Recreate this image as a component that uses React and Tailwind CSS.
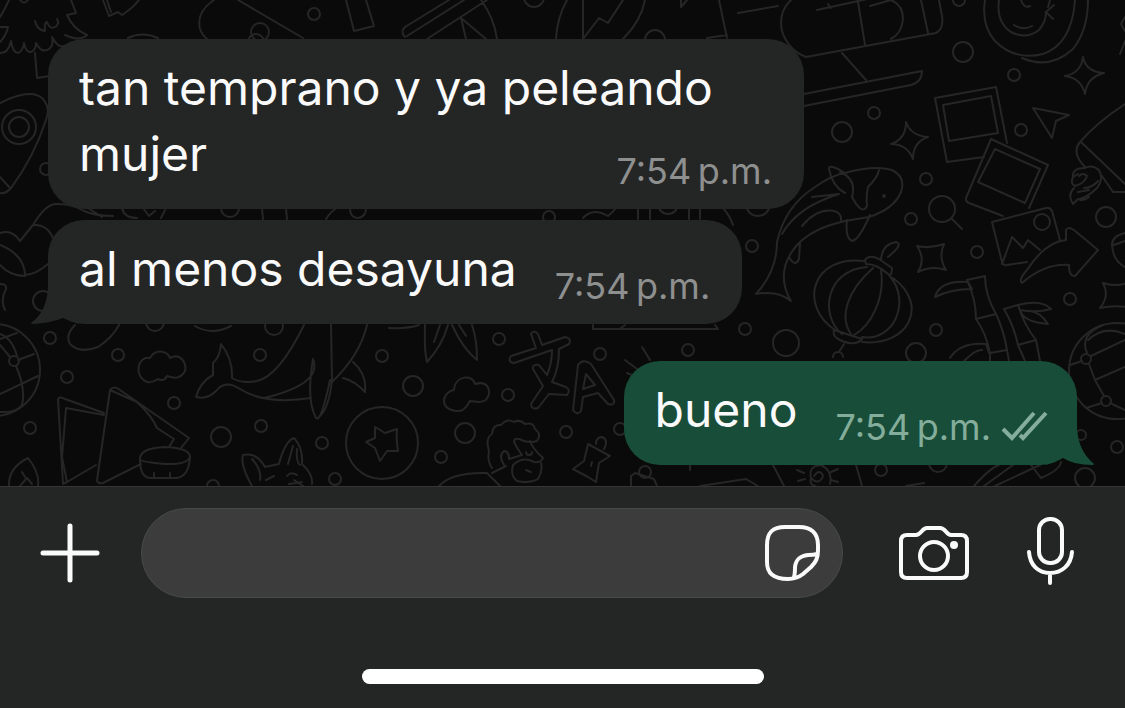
import { useState } from 'react'
import clsx from 'clsx'

const MESSAGES = [
  { id: 1, text: 'tan temprano y ya peleando mujer', time: '7:54\u2009p.m.', mine: false, tail: false },
  { id: 2, text: 'al menos desayuna', time: '7:54\u2009p.m.', mine: false, tail: true },
  { id: 3, text: 'bueno', time: '7:54\u2009p.m.', mine: true, tail: true },
]

// small bubbles scattered between the doodles: [cx, cy, r]
const DOTS = [
  [314, 14, 6], [534, -3, 10], [655, 40, 10], [46, 169, 6], [260, 32, 9], [256, 42, 8],
  [963, 52, 10], [1014, 75, 6], [874, 113, 6], [842, 132, 10], [1021, 130, 6], [926, 179, 6],
  [911, 219, 6], [977, 252, 6], [1106, 217, 10], [1070, 299, 6], [936, 330, 6], [786, 343, 13],
  [916, 353, 10], [745, 329, 6], [752, 246, 6], [758, 204, 12], [688, 350, 6], [959, 0, 6],
  [50, 338, 6], [118, 355, 6], [67, 377, 6], [174, 403, 6], [30, 428, 6], [221, 437, 10],
  [261, 426, 6], [322, 443, 6], [260, 355, 6], [274, 326, 9], [155, 322, 9], [43, 301, 10],
  [382, 356, 6], [413, 386, 10], [465, 433, 10], [441, 457, 6], [335, 479, 6], [508, 395, 6],
  [499, 339, 6], [600, 354, 6], [566, 432, 6], [620, 429, 6], [213, 486, 6], [1117, 447, 6],
  [1085, 478, 10], [881, 470, 6], [938, 463, 9], [1081, 435, 5], [645, 472, 6], [230, 208, 9],
  [549, 217, 6], [668, 204, 10],
]

const DOODLES = [
  // tree
  'M9 0Q5 9 0 17M0 27L8 27Q6 36 0 42M71 0L76 13L67 15Q73 29 87 35Q80 42 65 35M0 53Q8 54 11 41Q13 53 18 53Q23 51 24 43Q26 53 31 52Q36 50 36 43Q42 54 49 49Q54 45 52 37Q58 48 63 46M35 21Q37 30 45 31Q44 23 47 22Q50 30 55 27Q60 24 57 19M35 53L37 78L49 76M20 0Q24 5 28 0',
  // ribbon, rocket and pencil along the top
  'M103 0L109 16L118 12L122 15Q133 8 139 0M107 0L111 12M128 38Q142 31 158 38M214 0Q196 12 200 29Q202 35 207 39M238 0L303 38M346 0L354 31L374 26L366 0',
  'M449 0L405 27Q400 32 405 37M464 0L407 36M487 0L430 37L420 44M461 18L466 39M461 18L486 39M481 0Q494 18 497 39M567 0Q557 18 556 39M583 0V39L599 18L608 23L623 0M645 0Q641 21 623 39M681 0V7L687 0M719 0L727 38M707 38L727 35',
  // eye shaped leaf
  'M0 103Q30 88 42 98Q51 107 46 120Q34 157 11 188Q6 194 0 193M0 177L9 187',
  // telescope and stand
  'M738 13L778 6M791 0Q778 12 782 31Q788 50 806 57L936 33Q944 29 942 16L939 0M817 10L872 -2M828 4L831 8M858 2L865 45M870 6L891 0Q903 5 903 19Q902 33 891 39M921 0L928 33M842 53L866 80M804 94L922 71Q922 82 911 85L804 106',
  // globe face
  'M985 0Q981 25 995 41Q1015 61 1043 54Q1072 44 1075 0M1022 58Q1050 70 1073 49Q1088 30 1088 0M999 0Q996 22 1011 32Q1026 40 1039 30Q1046 22 1046 12L1054 5M1046 12L1053 19M1048 7L1050 0M1014 25Q1023 31 1032 26M1021 0Q1024 9 1030 6',
  // sparkles
  'M1083 57Q1086 72 1104 73Q1087 77 1085 94Q1081 78 1065 76Q1081 73 1083 57ZM906 122Q911 136 928 137Q913 142 913 159Q907 144 891 144Q906 139 906 122Z',
  'M917 246Q930 249 944 244Q938 257 946 270Q932 265 918 272Q926 259 917 246ZM1103 283Q1114 287 1128 283M1103 283Q1110 296 1100 308Q1113 305 1128 307M0 284Q7 284 6 289Q0 300 5 310',
  // photos
  'M935 98L996 87L1007 143M935 98L947 162L984 157M943 105L991 96L998 133L949 141ZM991 139L1048 165L1029 208M991 139L966 198Q965 201 969 203L1003 216M995 149L1040 169L1025 203L978 182Z',
  'M992 222L1046 208Q1050 207 1052 211L1060 240M992 222L1002 262Q1003 266 1007 265L1027 262M1002 264L1012 237L1023 248L1028 240L1040 250M1022 283Q1018 280 1027 270Q1045 242 1066 240L1066 230Q1068 226 1074 230L1098 250L1075 276Q1069 277 1069 265Q1045 263 1022 283Z',
  'M1033 108L1069 115L1056 121L1052 138ZM1125 104Q1096 123 1080 142Q1071 153 1085 167M1081 142L1125 184M1102 176L1113 192L1125 192',
  // clump of leaves
  'M1085 168Q1072 168 1073 177L1078 174M1073 177Q1070 184 1075 186Q1084 184 1087 176Q1083 172 1079 176M1085 168Q1092 164 1099 170Q1104 179 1097 188Q1089 196 1080 199M1074 188Q1067 195 1073 204L1078 199Q1083 202 1089 197M1084 188Q1092 188 1098 181M1078 192L1089 190M1125 17L1121 24L1125 31M1125 41L1120 54',
  // koi fish
  'M845 193Q832 186 829 169Q828 164 840 170L845 173Q874 165 892 170Q906 177 901 192Q894 209 869 217L845 221Q813 228 797 245Q774 272 791 301Q778 290 756 294Q777 271 777 242Q785 206 815 187Q832 175 845 173M840 172Q857 179 852 197Q862 216 867 206Q866 195 868 187Q878 177 879 170M812 197Q830 195 839 194Q797 207 782 234M802 226Q819 206 837 212Q842 215 841 222M847 220Q845 238 852 241Q859 240 870 215M800 243L799 259Q795 268 789 257',
  // lantern
  'M865 260Q869 254 879 259L892 268Q892 277 888 274Q877 264 866 264ZM864 261C812 255 798 305 835 330M862 342C908 347 930 305 893 278M867 267C826 270 819 315 842 334M873 268C847 291 839 317 851 334M881 270C885 297 872 325 854 335M889 275C912 301 894 342 862 337M834 330Q832 336 840 340Q855 347 862 339L834 330M881 260Q882 244 896 242Q904 244 888 257M844 344L839 352M843 357A5 5 0 1 0 833 357',
  // magnifier
  'M952 219L962 229M942 222A13 13 0 1 0 942 196A13 13 0 1 0 942 222',
  // bamboo
  'M967 280L985 276Q985 295 996 314L976 319Q976 299 967 280M935 297Q940 280 968 282L972 289Q951 289 935 297M976 319Q986 333 990 353L1007 350Q1004 331 996 314M990 353V361M1007 350L1009 361M1004 309L1018 305Q1024 325 1036 340L1018 345Q1014 326 1004 309M1018 305Q1042 299 1051 309Q1037 313 1020 310M1020 310Q1023 322 1048 324Q1040 312 1030 311M1018 345L1025 361M1036 340L1040 361M950 358Q960 342 986 344L989 353M964 361Q976 349 982 350',
  // beach balls
  'M1125 334Q1104 325 1088 340M1103 325Q1079 335 1087 353M1091 356L1125 340M1070 365L1082 361M1089 364L1095 380L1125 367M1095 380L1104 396M1086 408L1102 403M1110 403L1125 410M1125 233Q1112 236 1112 245Q1113 261 1125 267M1114 245L1125 241',
  'M0 339L17 333M17 356Q12 338 0 334M18 360L34 354M16 366Q26 389 22 405Q17 413 0 412M0 394L38 376M0 345L10 357',
  // left edge socks and bean
  'M0 233Q12 229 20 241L33 225Q45 205 55 204Q72 203 84 211Q95 216 113 216M33 225Q47 224 53 238M0 245Q25 255 25 276Q10 276 0 265M25 275Q35 275 48 264M75 325Q65 335 70 344Q80 354 98 347Q112 338 119 325M88 208L102 217M122 208Q124 218 137 218M143 208L149 216L155 211M161 218L166 208M262 208L263 219M286 208L287 219M326 219Q330 212 337 208M350 208Q350 218 358 218Q366 217 366 208',
  // cloud
  'M147 382C132 375 139 355 150 358C155 349 167 350 170 358C180 352 187 363 185 371C180 380 173 378 167 376Q164 382 158 379Q152 383 147 382Z',
  // open book
  'M58 399L63 484L67 482L96 465M58 399Q59 396 65 399L104 413M66 408L62 457L67 482M66 408L104 415M110 390L97 480Q97 484 103 483L141 464M110 390Q114 385 120 390L189 438L181 448M110 390L137 402Q152 416 157 428L174 439L169 447',
  // bowl
  'M140 460Q139 448 165 447Q190 448 190 457Q187 465 165 464Q143 462 140 460ZM140 460Q140 478 151 478H177Q189 476 190 457M154 473V478M170 473V478',
  // whale
  'M304 325Q279 376 257 381Q242 384 232 378Q233 359 221 344Q220 357 213 363L213 375Q200 382 196 397Q207 400 216 391Q225 379 240 389Q265 405 311 398M313 359Q323 384 264 398M313 359Q306 400 316 418Q321 423 330 380M331 325L332 380Q329 408 320 416M367 325Q360 355 332 382M353 362Q367 374 365 392Q355 381 343 378M195 326Q212 336 231 326M389 328Q407 329 419 325',
  // leaf and fox
  'M9 486Q8 468 28 458Q40 473 38 486M20 486L27 478L32 484M22 472L25 477M252 486Q240 465 243 455Q257 452 265 467L279 464Q285 441 294 438Q303 447 302 464Q313 474 312 484M252 459Q262 470 260 480M293 446Q289 460 288 464M297 449Q296 462 300 465M266 480L274 476M287 476Q291 471 297 475M289 484L302 482M294 480L303 486',
  // leaf bunch
  'M425 325Q424 350 427 362Q442 346 448 325M440 325L434 342M452 325Q463 349 477 360Q477 339 472 325M459 325L466 336',
  // second cloud
  'M458 411C437 410 443 391 454 390C455 375 473 374 475 384C489 380 492 392 486 400C480 404 475 401 470 401Q464 412 458 411Z',
  // letters
  'M531 334Q534 329 538 334L542 345L565 337Q572 338 569 344L559 349Q559 369 552 382L566 387Q571 390 567 395L549 394L538 408Q531 410 531 404L543 386L533 369Q532 364 539 365L547 375Q552 363 552 350L514 363Q507 362 511 356L536 348Z',
  'M578 365Q583 358 591 364L614 400Q615 406 608 404L598 393L583 397L581 411Q577 416 573 410ZM586 374L583 389L595 385Z',
  // star coin
  'M418 443A36 36 0 1 0 346 443A36 36 0 1 0 418 443M375 427L385 433L397 429Q396 438 398 451L387 451L380 461L375 448L366 442L375 438Z',
  // bearded head
  'M492 468Q487 461 489 451Q485 438 492 434Q493 424 501 425Q507 418 514 422Q520 419 525 424Q534 422 535 429Q542 434 537 441Q531 443 524 441Q514 436 514 442Q518 450 522 455L509 459Q509 451 504 451Q498 456 504 465M492 473L506 466M530 441Q532 448 543 458Q541 463 534 462Q523 456 513 465Q510 476 517 481Q529 484 538 479Q543 471 541 463M526 452A3 3 0 1 0 532 452M526 470L531 472M439 486Q452 472 487 473L500 486',
  // star tag and pin
  'M588 444L610 456L599 463L596 482L588 477L573 469L584 461ZM592 462L591 466M596 444Q596 437 602 437Q609 440 604 449M625 360L637 369M627 373L632 375M642 347L650 360M593 325V329H718L715 325M621 328L625 325',
  // bottom strip
  'M631 486V476L635 473L654 479L657 486M700 486L746 479L758 486M773 465L784 486M856 465L862 486M974 486Q990 468 999 465M984 486L1013 465M995 486L1040 465M1031 465L1041 478M1041 478Q1060 470 1061 462M906 486L924 483M690 465V470M797 470L804 473M798 481L805 479M838 469L831 472M838 482L831 480M814 476Q820 468 823 476Q819 486 811 478Q808 466 821 465Q833 471 830 484M811 478Q809 484 815 486',
  'M583 218Q593 207 608 216Q613 212 616 208M638 208V219M650 208V219M689 208V219M700 208V219M723 208Q730 216 733 225',
]

function Wallpaper() {
  return (
    <svg
      className="absolute inset-0 h-full w-full text-[#262626]"
      viewBox="0 0 1125 486"
      preserveAspectRatio="xMidYMid slice"
      fill="none"
      stroke="currentColor"
      strokeWidth="2"
      strokeLinecap="round"
      strokeLinejoin="round"
      aria-hidden="true"
    >
      {DOODLES.map(d => <path key={d} d={d} />)}
      {DOTS.map(([cx, cy, r]) => <circle key={`${cx}-${cy}`} cx={cx} cy={cy} r={r} />)}
      <circle cx="19" cy="127" r="17" />
      <circle cx="19" cy="127" r="10" />
      <circle cx="-6" cy="370" r="46" />
      <circle cx="14" cy="361" r="5" />
      <circle cx="1117" cy="371" r="48" />
      <circle cx="1086" cy="359" r="5" />
      <circle cx="1106" cy="401" r="5" />
      <circle cx="1042" cy="222" r="8" />
      <circle cx="884" cy="196" r="1" />
    </svg>
  )
}

function Tail({ mine }) {
  return mine ? (
    <svg className="absolute bottom-0 -right-[17px] h-10 w-12 text-[#184d39]" viewBox="0 0 48 40" fill="currentColor" aria-hidden="true">
      <path d="M31 0Q31 25 48 39Q48 40 46 40Q28 40 17 33L0 40V0Z" />
    </svg>
  ) : (
    <svg className="absolute bottom-0 -left-[17px] h-10 w-12 text-[#242626]" viewBox="0 0 48 40" fill="currentColor" aria-hidden="true">
      <path d="M17 0Q17 27 0 39Q0 40 2 40Q20 39 32 34L48 40V0Z" />
    </svg>
  )
}

function Ticks() {
  return (
    <svg className="h-8 w-12" viewBox="0 0 48 32" fill="none" stroke="currentColor" strokeWidth="4" role="img" aria-label="Entregado">
      <path d="M2 18L11 27L33 2M19 24L22 27L45 2" />
    </svg>
  )
}

function Message({ text, time, mine, tail }) {
  return (
    <li
      className={clsx(
        'relative w-fit max-w-[756px] rounded-[36px] pt-4 pb-[18px] pl-[31px] text-5xl leading-[66px]',
        mine ? 'mt-[26px] self-end bg-[#184d39] pr-7' : 'self-start bg-[#242626] pr-8',
      )}
    >
      {tail && <Tail mine={mine} />}
      <p className="relative text-[#fafafa]">
        {text}
        <span
          className={clsx(
            'float-right mt-[30px] ml-[38px] flex items-center gap-[10px] text-4xl leading-10',
            mine ? 'text-[#84ad9b]' : 'text-[#8e8f8f]',
          )}
        >
          <time dateTime="19:54">{time}</time>
          {mine && <Ticks />}
        </span>
      </p>
    </li>
  )
}

export default function App() {
  const [draft, setDraft] = useState('')

  return (
    <div className="flex min-h-screen flex-col bg-[#242626] font-['Inter',sans-serif]">
      {/* Chat */}
      <main className="relative flex-1 overflow-hidden bg-[#0a0a0a]">
        <Wallpaper />
        <ul className="relative flex flex-col gap-[11px] pt-[39px] pr-12 pb-[21px] pl-12">
          {MESSAGES.map(m => <Message key={m.id} {...m} />)}
        </ul>
      </main>

      {/* Composer */}
      <footer className="border-t border-[#343636] bg-[#242626] pt-[21px] pb-6">
        <form className="flex items-center pr-[50px] pl-10 text-[#fafafa]" onSubmit={e => e.preventDefault()}>
          <button type="button" aria-label="Adjuntar">
            <svg className="h-[60px] w-[60px]" viewBox="0 0 60 60" fill="none" stroke="currentColor" strokeWidth="5" strokeLinecap="round">
              <path d="M3 30H57M30 3V57" />
            </svg>
          </button>
          <div className="ml-[41px] flex h-[90px] min-w-0 flex-1 items-center rounded-full border border-[#484949] bg-[#3c3c3c] pr-5 pl-8">
            <input
              value={draft}
              onChange={e => setDraft(e.target.value)}
              aria-label="Mensaje"
              className="min-w-0 flex-1 bg-transparent text-5xl outline-none"
            />
            <button type="button" aria-label="Stickers">
              <svg className="h-[60px] w-[60px]" viewBox="0 0 60 60" fill="none" stroke="currentColor" strokeWidth="4" strokeLinecap="round" strokeLinejoin="round">
                <path d="M26 56C11 56 5 50 5 39V22C5 9 11 4 23 4H37C49 4 56 10 56 22V27C56 35 54 39 49 44L41 51C36 55 32 56 26 56ZM32 54C33 51 33 48 33 44C34 36 38 33 46 32C50 32 52 32 55 31" />
              </svg>
            </button>
          </div>
          <button type="button" aria-label="Cámara" className="ml-[55px]">
            <svg className="h-[60px] w-[72px]" viewBox="0 0 72 60" fill="none" stroke="currentColor" strokeWidth="4" strokeLinejoin="round">
              <path d="M9 12H18C23 12 24 5 29 5H42C48 5 48 12 53 12H63Q69 12 69 18V49Q69 55 63 55H9Q3 55 3 49V18Q3 12 9 12Z" />
              <circle cx="36" cy="33" r="14" />
              <circle cx="56" cy="22" r="4" fill="currentColor" stroke="none" />
            </svg>
          </button>
          <button type="button" aria-label="Mensaje de voz" className="ml-[55px]">
            <svg className="h-[72px] w-[50px]" viewBox="0 0 50 72" fill="none" stroke="currentColor" strokeWidth="4" strokeLinecap="round">
              <rect x="14" y="2" width="23" height="44" rx="11" />
              <path d="M4 35C5 48 13 56 25 56S46 48 47 35M25 56V66" />
            </svg>
          </button>
        </form>
        <div className="mx-auto mt-[71px] h-[15px] w-[402px] rounded-full bg-white" />
      </footer>
    </div>
  )
}
